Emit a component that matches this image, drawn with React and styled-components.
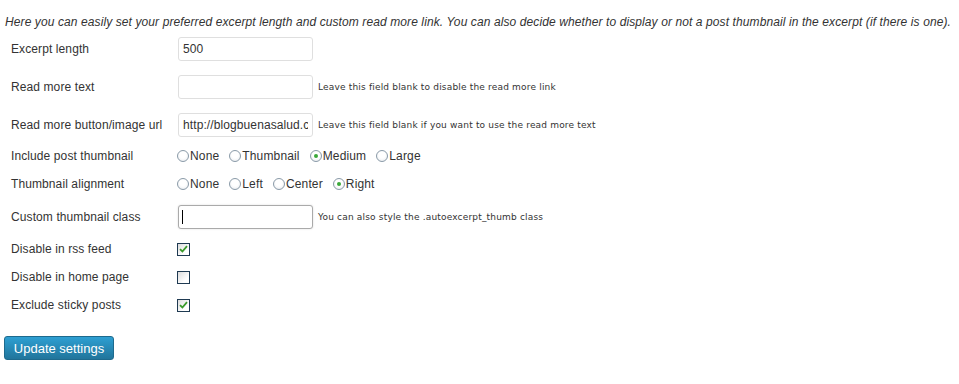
import React from 'react';
import styled, { createGlobalStyle } from 'styled-components';

// ================= STYLES =================

const GlobalStyle = createGlobalStyle`
  html, body {
    margin: 0;
    padding: 0;
    background: #fff;
  }
  body {
    font-family: "Liberation Sans", Arial, sans-serif;
    font-size: 12px;
    color: #333;
  }
`;

const Page = styled.div`
  width: 959px;
  height: 384px;
  padding: 15px 5px 0;
  box-sizing: border-box;
`;

const Intro = styled.p`
  margin: 0;
  font-style: italic;
  font-size: 12px;
  line-height: 14px;
  letter-spacing: 0.1px;
  color: #333;
  white-space: nowrap;
`;

const Form = styled.div`
  display: flex;
  flex-direction: column;
  margin-top: 1px;
`;

const Row = styled.div`
  display: grid;
  grid-template-columns: 173px 1fr;
  align-items: center;
  height: ${(p) => p.$h}px;
`;

const Label = styled.div`
  padding-left: 6px;
  font-size: 12px;
  letter-spacing: 0.1px;
  color: #333;
`;

const Field = styled.div`
  display: flex;
  align-items: center;
`;

const InputWrap = styled.div`
  position: relative;
  display: flex;
`;

const TextInput = styled.input`
  width: 135px;
  height: 24px;
  box-sizing: border-box;
  border: 1px solid ${(p) => (p.$focused ? '#aaa' : '#dfdfdf')};
  border-radius: 3px;
  padding: 0 4px;
  font-family: "Liberation Sans", Arial, sans-serif;
  font-size: 12px;
  letter-spacing: 0.1px;
  color: #333;
  background: #fff;
  outline: none;
  box-shadow: ${(p) => (p.$focused ? '0 0 2px rgba(0,0,0,0.15)' : 'none')};
`;

const Caret = styled.span`
  position: absolute;
  left: 4px;
  top: 5px;
  width: 1px;
  height: 14px;
  background: #000;
`;

const Help = styled.span`
  margin-left: 5px;
  font-family: "DejaVu Sans", Verdana, sans-serif;
  font-size: 9px;
  letter-spacing: 0.18px;
  color: #333;
  white-space: nowrap;
`;

const RadioGroup = styled.div`
  display: flex;
  align-items: center;
  gap: 10px;
  margin-left: -1px;
`;

const Option = styled.label`
  display: flex;
  align-items: center;
  font-size: 12px;
  letter-spacing: 0.15px;
  color: #333;
`;

const RadioDot = styled.span`
  width: 12px;
  height: 12px;
  box-sizing: border-box;
  border-radius: 50%;
  border: 1px solid #8a9aa8;
  background: radial-gradient(circle at 50% 40%, #fff 40%, #e4e8ec 100%);
  display: flex;
  align-items: center;
  justify-content: center;
  margin-right: 1px;

  &::after {
    content: '';
    display: ${(p) => (p.$on ? 'block' : 'none')};
    width: 4px;
    height: 4px;
    border-radius: 50%;
    background: #3aa83a;
  }
`;

const Check = styled.span`
  width: 13px;
  height: 13px;
  box-sizing: border-box;
  border: 1px solid #1f3a52;
  background: linear-gradient(135deg, #dcdcdc 0%, #fff 70%);
  display: flex;
  align-items: center;
  justify-content: center;
  margin-left: -1px;
`;

const Button = styled.button`
  margin-top: 16px;
  margin-left: -1px;
  width: 110px;
  height: 24px;
  border: 1px solid #1e6a8d;
  border-radius: 3px;
  background: linear-gradient(to bottom, #2e9fd2 0%, #21759b 100%);
  color: #fff;
  font-family: "Liberation Sans", Arial, sans-serif;
  font-size: 13px;
  padding: 0;
  cursor: pointer;
`;

// ================= COMPONENT =================

const Radios = ({ options, selected }) => (
  <RadioGroup>
    {options.map((o) => (
      <Option key={o}>
        <RadioDot $on={o === selected} />
        {o}
      </Option>
    ))}
  </RadioGroup>
);

const CheckBox = ({ checked }) => (
  <Check>
    {checked && (
      <svg width="9" height="8" viewBox="0 0 9 8">
        <path d="M1 4.2 L3.4 6.5 L8 1.2" fill="none" stroke="#3a9a2a" strokeWidth="1.8" />
      </svg>
    )}
  </Check>
);

const App = () => (
  <Page>
    <GlobalStyle />
    <Intro>
      Here you can easily set your preferred excerpt length and custom read more link. You can also decide whether to display or not a post thumbnail in the excerpt (if there is one).
    </Intro>
    <Form>
      <Row $h={38}>
        <Label>Excerpt length</Label>
        <Field>
          <TextInput defaultValue="500" />
        </Field>
      </Row>
      <Row $h={38}>
        <Label>Read more text</Label>
        <Field>
          <TextInput defaultValue="" />
          <Help>Leave this field blank to disable the read more link</Help>
        </Field>
      </Row>
      <Row $h={38}>
        <Label>Read more button/image url</Label>
        <Field>
          <TextInput defaultValue="http://blogbuenasalud.com/wp-content/leer-mas.png" />
          <Help>Leave this field blank if you want to use the read more text</Help>
        </Field>
      </Row>
      <Row $h={24}>
        <Label>Include post thumbnail</Label>
        <Radios options={['None', 'Thumbnail', 'Medium', 'Large']} selected="Medium" />
      </Row>
      <Row $h={32}>
        <Label>Thumbnail alignment</Label>
        <Radios options={['None', 'Left', 'Center', 'Right']} selected="Right" />
      </Row>
      <Row $h={34}>
        <Label>Custom thumbnail class</Label>
        <Field>
          <InputWrap>
            <TextInput $focused defaultValue="" />
            <Caret />
          </InputWrap>
          <Help>You can also style the .autoexcerpt_thumb class</Help>
        </Field>
      </Row>
      <Row $h={30}>
        <Label>Disable in rss feed</Label>
        <CheckBox checked />
      </Row>
      <Row $h={26}>
        <Label>Disable in home page</Label>
        <CheckBox />
      </Row>
      <Row $h={30}>
        <Label>Exclude sticky posts</Label>
        <CheckBox checked />
      </Row>
    </Form>
    <Button>Update settings</Button>
  </Page>
);

export default App;
